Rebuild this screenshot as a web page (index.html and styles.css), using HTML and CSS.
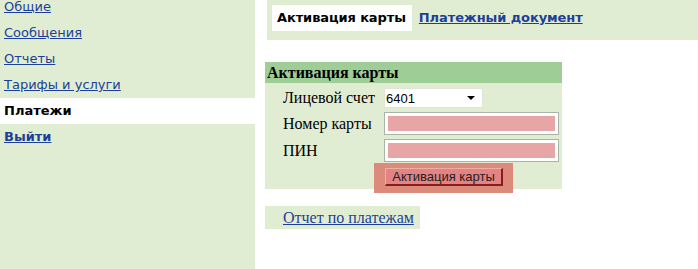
FILE: index.html
```html
<!DOCTYPE html>
<html lang="ru">
<head>
    <meta charset="UTF-8">
    <title>Платежи</title>
    <link rel="stylesheet" href="styles.css">
</head>
<body>
    <div class="sidebar">
        <ul class="menu">
            <li><a href="#">Общие</a></li>
            <li><a href="#">Сообщения</a></li>
            <li><a href="#">Отчеты</a></li>
            <li><a href="#">Тарифы и услуги</a></li>
            <li class="active">Платежи</li>
            <li><a href="#" class="exit">Выйти</a></li>
        </ul>
    </div>

    <div class="main">
        <div class="tabs">
            <span class="tab current">Активация карты</span>
            <a href="#" class="tab">Платежный документ</a>
        </div>

        <form class="card-form" onsubmit="return false">
            <div class="form-title">Активация карты</div>
            <div class="form-body">
                <label for="account">Лицевой счет</label>
                <div class="select-wrap">
                    <select id="account">
                        <option>6401</option>
                    </select>
                </div>

                <label for="card">Номер карты</label>
                <input type="text" id="card" class="field">

                <label for="pin">ПИН</label>
                <input type="text" id="pin" class="field">

                <span></span>
                <span class="btn-halo"><button class="btn">Активация карты</button></span>
            </div>
        </form>

        <div class="report">
            <a href="#">Отчет по платежам</a>
        </div>
    </div>
</body>
</html>
```

FILE: styles.css
```css
body {
    margin: 0;
    display: flex;
    min-height: 100vh;
    background: #fff;
    font-family: "DejaVu Sans", Verdana, sans-serif;
    font-size: 13px;
    overflow: hidden;
}
a {
    color: #1c3f98;
}
.sidebar {
    width: 255px;
    flex: none;
    background: #e1edd3;
}
.menu {
    list-style: none;
    margin: -6px 0 0 0;
    padding: 0;
}
.menu li {
    height: 26px;
    line-height: 26px;
    padding-left: 4px;
}
.menu li.active {
    background: #fff;
    font-weight: bold;
    color: #000;
}
.menu .exit {
    font-weight: bold;
}
.main {
    flex: 1;
    padding-left: 10px;
}
.tabs {
    margin-left: 2px;
    height: 40px;
    background: #e1edd3;
    padding: 5px 0 0 5px;
    box-sizing: border-box;
    display: flex;
    align-items: flex-start;
}
.tab {
    height: 26px;
    line-height: 26px;
    padding: 0 6px 0 5px;
    font-weight: bold;
    letter-spacing: -0.1px;
}
.tab.current {
    background: #fff;
    color: #000;
}
.tab + .tab {
    margin-left: 2px;
}
.card-form {
    margin: 22px 0 0 0;
    width: 297px;
    background: #e1edd3;
}
.form-title,
.form-body label,
.report {
    font-family: "Liberation Serif", "Times New Roman", serif;
    font-size: 16px;
}
.form-title {
    height: 21px;
    line-height: 21px;
    background: #9ecd96;
    font-weight: bold;
    padding-left: 2px;
}
.form-body {
    display: grid;
    grid-template-columns: 101px 175px;
    align-items: center;
    row-gap: 4px;
    padding: 5px 0 0 18px;
}
.form-body label {
    color: #000;
}
.select-wrap {
    position: relative;
    width: 99px;
}
.select-wrap::after {
    content: "";
    position: absolute;
    right: 8px;
    top: 8px;
    border-left: 4px solid transparent;
    border-right: 4px solid transparent;
    border-top: 4px solid #000;
    pointer-events: none;
}
.select-wrap select {
    appearance: none;
    width: 99px;
    height: 20px;
    border: 1px solid #dfe5d9;
    background: #fff;
    font-family: "Liberation Sans", Arial, sans-serif;
    font-size: 13px;
    padding: 0 1px;
    color: #000;
}
.field {
    box-sizing: border-box;
    width: 175px;
    height: 23px;
    border: 1px solid #aab3a6;
    background: #e8a5a5;
    box-shadow: inset 0 0 0 3px #fff;
    padding: 0 5px;
}
.btn-halo {
    justify-self: start;
    margin: -3px 0 -4px -10px;
    padding: 5px 10px 7px 11px;
    background: #dc8b7b;
}
.btn {
    display: block;
    width: 118px;
    height: 18px;
    padding: 0;
    background: #e48383;
    border: 1px solid #e9b0a8;
    border-right-color: #8a1c1c;
    border-bottom-color: #8a1c1c;
    border-right-width: 2px;
    border-bottom-width: 2px;
    font-family: "Liberation Sans", Arial, sans-serif;
    font-size: 13px;
    color: #222;
    cursor: pointer;
}
.report {
    margin-top: 17px;
    width: 137px;
    height: 23px;
    line-height: 23px;
    padding-left: 18px;
    background: #e1edd3;
}
```
